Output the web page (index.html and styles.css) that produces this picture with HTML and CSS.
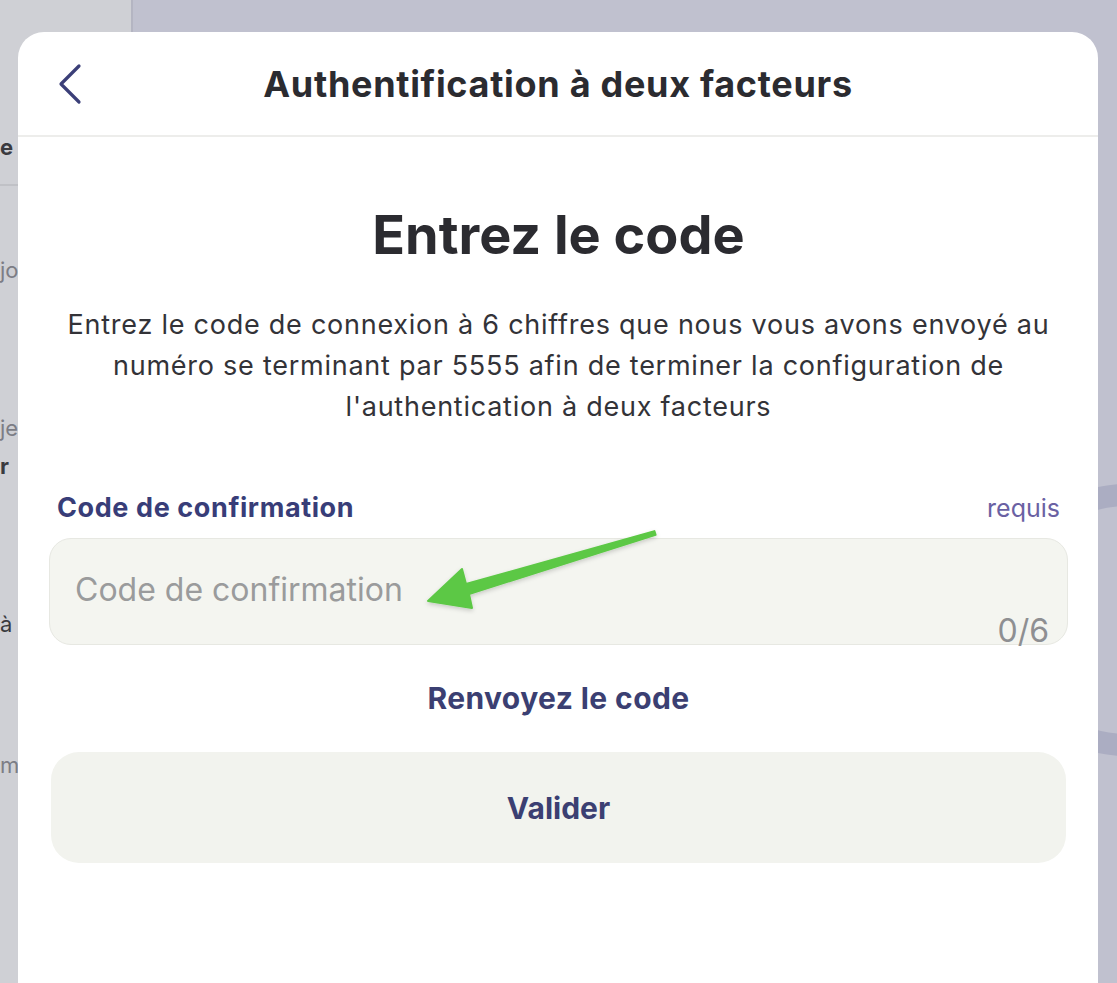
FILE: index.html
```html
<!DOCTYPE html>
<html lang="fr">
<head>
<meta charset="utf-8">
<title>Authentification à deux facteurs</title>
<link rel="stylesheet" href="styles.css">
</head>
<body>
<div class="page">
  <aside class="sidebar">
    <div class="side-top"></div>
    <div class="side-item side-bold">e</div>
    <div class="side-sep"></div>
    <div class="side-item side-muted s1">jo</div>
    <div class="side-item side-muted s2">je</div>
    <div class="side-item side-bold s3">r</div>
    <div class="side-item s4">à</div>
    <div class="side-item side-muted s5">m</div>
  </aside>
  <main class="main">
    <svg class="ring" width="120" height="320" viewBox="0 0 120 320">
      <circle cx="130" cy="150" r="125" fill="none" stroke="#abadc2" stroke-width="22"/>
    </svg>
  </main>

  <div class="modal">
    <header class="modal-head">
      <button class="back" aria-label="Retour">
        <svg width="28" height="42" viewBox="0 0 28 42"><path d="M23 3 L5 21 L23 39" fill="none" stroke="#3b3f78" stroke-width="3.2" stroke-linecap="round" stroke-linejoin="round"/></svg>
      </button>
      <h1 class="modal-title">Authentification à deux facteurs</h1>
      <span></span>
    </header>
    <section class="modal-body">
      <h2 class="heading">Entrez le code</h2>
      <p class="desc">Entrez le code de connexion à 6 chiffres que nous vous avons envoyé au numéro se terminant par 5555 afin de terminer la configuration de l'authentication à deux facteurs</p>
      <div class="label-row">
        <label class="label" for="code">Code de confirmation</label>
        <span class="required">requis</span>
      </div>
      <div class="field">
        <input id="code" class="input" type="text" placeholder="Code de confirmation">
        <span class="counter">0/6</span>
      </div>
      <div class="resend">Renvoyez le code</div>
      <button class="submit">Valider</button>
    </section>
  </div>

  <svg class="annot" width="1117" height="983" viewBox="0 0 1117 983">
    <defs>
      <filter id="sh" x="-10%" y="-10%" width="120%" height="140%">
        <feDropShadow dx="0" dy="2" stdDeviation="2" flood-color="#000" flood-opacity="0.18"/>
      </filter>
    </defs>
    <polygon filter="url(#sh)" fill="#5cc845" stroke="#5cc845" stroke-width="2" stroke-linejoin="round"
      points="428,601 462,569 466,584 654.4,531.1 655.6,534.9 469,594 472,608"/>
  </svg>
</div>
</body>
</html>
```

FILE: styles.css
```css
* { box-sizing: border-box; }
html, body { margin: 0; padding: 0; }
body {
  width: 1117px;
  height: 983px;
  overflow: hidden;
  font-family: "Inter", "Liberation Sans", sans-serif;
  background: #c0c1cf;
}
.page {
  position: relative;
  display: flex;
  width: 1117px;
  height: 983px;
}
.sidebar {
  width: 133px;
  background: #cfd0d5;
  border-right: 2px solid #b4b5c2;
  display: flex;
  flex-direction: column;
  color: #3a3a3f;
  font-size: 22px;
}
.side-top { height: 132px; }
.side-item { line-height: 30px; white-space: nowrap; padding-left: 0; }
.side-bold { font-weight: 700; }
.side-muted { color: #7c7d85; }
.side-sep { height: 2px; background: #c0c1c6; margin-top: 22px; }
.s1 { margin-top: 69px; }
.s2 { margin-top: 128px; }
.s3 { margin-top: 8px; }
.s4 { margin-top: 128px; }
.s5 { margin-top: 111px; }
.main {
  flex: 1;
  position: relative;
  background: #c0c1cf;
}
.ring {
  position: absolute;
  right: 0;
  top: 470px;
}

.modal {
  position: absolute;
  left: 18px;
  top: 32px;
  width: 1080px;
  bottom: 0;
  background: #ffffff;
  border-radius: 26px 26px 0 0;
  display: flex;
  flex-direction: column;
}
.modal-head {
  height: 105px;
  border-bottom: 2px solid #ededeb;
  display: grid;
  grid-template-columns: 1fr auto 1fr;
  align-items: center;
  padding: 0 38px;
}
.back {
  justify-self: start;
  background: none;
  border: 0;
  padding: 0;
  display: flex;
  cursor: pointer;
}
.modal-title {
  margin: 0;
  font-size: 36px;
  font-weight: 650;
  color: #2b2b30;
  letter-spacing: 0.7px;
}
.modal-body {
  padding: 0 30px 0 31px;
  display: flex;
  flex-direction: column;
}
.heading {
  margin: 66px 0 0;
  text-align: center;
  font-size: 54px;
  line-height: 64px;
  font-weight: 700;
  color: #2b2b30;
}
.desc {
  margin: 37px 0 0;
  text-align: center;
  font-size: 27px;
  line-height: 41px;
  letter-spacing: 0.75px;
  color: #333338;
  padding: 0 8px;
}
.label-row {
  display: flex;
  justify-content: space-between;
  align-items: baseline;
  margin-top: 64px;
}
.label {
  font-size: 27px;
  font-weight: 700;
  letter-spacing: 0.6px;
  color: #383d78;
  padding-left: 8px;
}
.required {
  font-size: 25px;
  color: #6a61a3;
  padding-right: 8px;
}
.field {
  position: relative;
  margin-top: 14px;
  height: 107px;
  background: #f4f5f0;
  border: 1px solid #e7e8e2;
  border-radius: 22px;
}
.input {
  width: 100%;
  height: 100%;
  border: 0;
  background: transparent;
  padding: 0 25px 4px;
  font-family: inherit;
  font-size: 32px;
  color: #333;
  outline: none;
}
.input::placeholder { color: #9a9b9c; }
.counter {
  position: absolute;
  right: 18px;
  bottom: -6px;
  font-size: 32px;
  color: #8e8f92;
}
.resend {
  margin-top: 35px;
  text-align: center;
  font-size: 30px;
  font-weight: 700;
  letter-spacing: 0.4px;
  color: #3b3f72;
}
.submit {
  margin: 36px 2px 0;
  height: 111px;
  border: 0;
  border-radius: 28px;
  background: #f2f3ee;
  font-family: inherit;
  font-size: 30px;
  font-weight: 700;
  color: #3b3f72;
}
.annot {
  position: absolute;
  left: 0;
  top: 0;
  pointer-events: none;
}
```
